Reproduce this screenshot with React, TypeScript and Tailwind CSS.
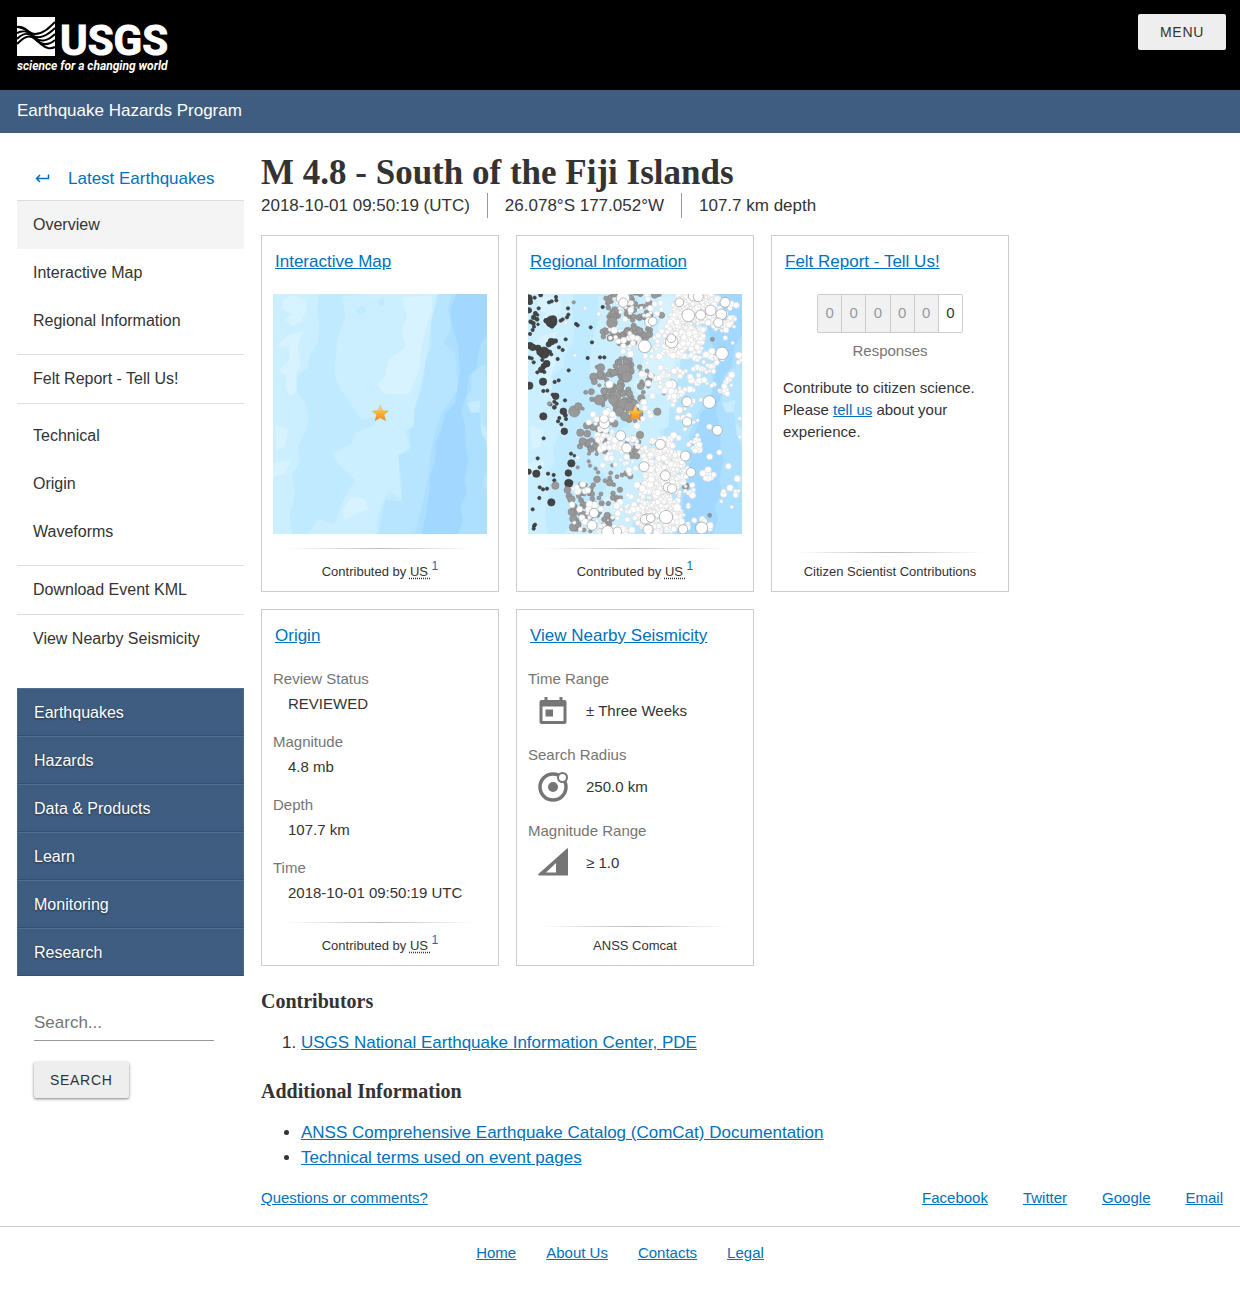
import type { ReactNode } from 'react';

const linkClass = 'text-[#0071bc] underline hover:text-[#205493]';

const pageGroups = [
  ['Overview', 'Interactive Map', 'Regional Information'],
  ['Felt Report - Tell Us!'],
  ['Technical', 'Origin', 'Waveforms'],
  ['Download Event KML'],
  ['View Nearby Seismicity'],
];

const groupClasses = [
  'border-t pb-[9px]',
  'border-t',
  'border-t pt-2 pb-[9px]',
  'border-t',
  'border-t',
];

const siteLinks = ['Earthquakes', 'Hazards', 'Data & Products', 'Learn', 'Monitoring', 'Research'];

const originFacts = [
  { label: 'Review Status', value: 'REVIEWED' },
  { label: 'Magnitude', value: '4.8 mb' },
  { label: 'Depth', value: '107.7 km' },
  { label: 'Time', value: '2018-10-01 09:50:19 UTC' },
];

type Dot = [x: number, y: number, r: number];
type Cluster = [x: number, y: number, rx: number, ry: number, count: number];

// Deep events, drawn individually
const deepDots: Dot[] = [
  [56, 205, 11], [60, 216, 8], [74, 203, 5], [92, 195, 6], [117, 217, 5], [125, 214, 5], [138, 201, 5], [139, 211, 5],
  [57, 241, 8], [86, 235, 5], [76, 250, 6], [71, 262, 7], [81, 268, 6], [83, 255, 4], [62, 275, 6], [70, 280, 6],
  [72, 290, 5], [68, 300, 5], [60, 312, 5], [108, 272, 7], [124, 275, 17], [130, 267, 10], [126, 289, 6], [84, 283, 4],
  [152, 272, 5], [158, 268, 5], [171, 262, 5], [174, 235, 5], [175, 254, 5], [198, 282, 5], [203, 286, 5], [242, 292, 5],
  [278, 231, 5], [246, 337, 5], [167, 328, 5], [124, 335, 10], [136, 333, 7], [116, 343, 8], [60, 347, 10], [68, 352, 10],
  [84, 354, 9], [102, 368, 17], [90, 366, 10], [147, 352, 5], [158, 360, 5], [120, 365, 5], [124, 373, 5], [143, 387, 5],
  [58, 383, 5], [65, 385, 5], [71, 397, 5], [97, 390, 5], [110, 401, 10], [101, 408, 8], [94, 419, 9], [82, 427, 5],
  [103, 426, 5], [176, 421, 5], [233, 384, 5], [270, 382, 5], [283, 382, 5], [58, 467, 11], [99, 455, 11], [134, 456, 5],
  [146, 451, 5], [100, 483, 5], [112, 482, 5], [137, 499, 10], [128, 494, 5], [165, 511, 5], [121, 523, 5], [133, 515, 5],
  [140, 521, 5], [133, 532, 6], [160, 544, 10], [166, 556, 6], [148, 564, 5], [144, 574, 5], [154, 583, 5], [163, 604, 10],
  [168, 567, 5], [100, 559, 11], [101, 625, 5], [83, 685, 5], [56, 725, 8], [79, 731, 11], [89, 712, 5], [114, 731, 5],
  [131, 735, 5], [89, 772, 5], [99, 778, 5], [111, 776, 5], [133, 751, 5], [124, 817, 11], [88, 804, 5], [68, 838, 5],
  [72, 888, 5], [75, 884, 5], [71, 896, 5], [183, 671, 5], [193, 677, 4], [184, 700, 11], [175, 729, 10], [176, 760, 12],
  [237, 649, 5], [213, 845, 5], [184, 757, 5],
];

// Intermediate-depth events
const midDots: Dot[] = [
  [191, 217, 5], [306, 278, 16], [288, 205, 7], [296, 215, 8], [260, 411, 5], [272, 413, 12], [251, 441, 12], [253, 455, 9],
  [227, 487, 6], [244, 485, 9], [267, 510, 15], [193, 544, 17], [205, 529, 11], [211, 608, 11], [218, 634, 11], [210, 649, 8],
  [118, 521, 6], [218, 536, 5], [246, 508, 7], [442, 545, 11], [455, 256, 9], [462, 490, 5], [394, 505, 11], [416, 452, 9],
  [446, 192, 8], [434, 195, 10], [390, 615, 11], [380, 678, 9], [426, 635, 8], [377, 660, 7], [136, 767, 11], [237, 671, 5],
  [236, 694, 5], [240, 707, 5], [203, 712, 5], [257, 716, 5], [264, 727, 5], [307, 706, 5], [302, 729, 6], [299, 744, 6],
  [285, 752, 6], [250, 765, 7], [243, 776, 7], [223, 793, 5], [172, 780, 10], [177, 798, 9], [184, 808, 11], [191, 830, 10],
  [190, 866, 11], [190, 892, 12], [205, 886, 8], [222, 900, 6], [213, 812, 6], [247, 792, 7], [247, 806, 7], [252, 818, 6],
  [321, 740, 6], [336, 735, 6], [350, 730, 9], [361, 739, 8], [311, 764, 6], [309, 790, 7], [319, 810, 6], [332, 803, 6],
  [292, 857, 10], [305, 865, 9], [283, 868, 8], [296, 820, 6], [392, 770, 9], [527, 769, 10], [599, 856, 6], [607, 328, 6],
  [230, 587, 10], [263, 587, 9], [248, 592, 9], [232, 611, 10], [244, 630, 7], [240, 655, 5], [260, 672, 5], [215, 830, 6],
  [343, 420, 19], [350, 440, 16], [317, 500, 16], [338, 525, 17], [310, 510, 14], [356, 530, 14], [328, 545, 14], [345, 560, 13],
];

const midClusters: Cluster[] = [
  [305, 235, 22, 55, 26], [385, 230, 42, 45, 34], [385, 310, 40, 28, 26], [305, 312, 32, 18, 14], [342, 325, 20, 30, 16],
  [343, 415, 28, 34, 34], [300, 450, 50, 32, 22], [320, 505, 48, 42, 44], [370, 545, 24, 34, 22], [290, 590, 42, 26, 14],
  [265, 650, 42, 28, 14], [270, 790, 75, 75, 20], [205, 850, 22, 55, 18], [365, 650, 24, 30, 10], [400, 450, 25, 45, 10],
  [260, 885, 50, 25, 8],
];

// Shallow events: dense clusters first, then the larger ones on top
const shallowClusters: Cluster[] = [
  [560, 225, 70, 42, 170], [530, 290, 60, 60, 190], [520, 345, 60, 38, 90], [620, 240, 62, 50, 56], [640, 280, 40, 28, 18],
  [460, 340, 28, 38, 14], [590, 390, 36, 34, 18], [345, 235, 24, 42, 16], [425, 230, 42, 40, 12], [325, 315, 44, 20, 10],
  [365, 350, 34, 30, 12], [435, 410, 55, 65, 22], [500, 460, 60, 50, 22], [580, 440, 45, 38, 14], [640, 470, 30, 18, 5],
  [520, 510, 55, 42, 14], [285, 590, 38, 50, 26], [300, 645, 42, 35, 22], [350, 660, 42, 38, 18], [455, 665, 62, 42, 60],
  [465, 720, 68, 62, 190], [450, 790, 60, 65, 190], [450, 860, 72, 50, 190], [555, 645, 28, 18, 14], [600, 730, 22, 16, 7],
  [240, 862, 50, 48, 20], [310, 900, 65, 12, 20], [210, 775, 25, 14, 4], [380, 830, 35, 70, 26], [540, 830, 24, 70, 12],
  [525, 590, 45, 60, 12], [405, 560, 40, 55, 7], [655, 400, 40, 100, 12], [640, 720, 55, 110, 9], [590, 880, 28, 20, 8],
  [320, 700, 60, 45, 9], [340, 850, 40, 35, 8],
];

const shallowDots: Dot[] = [
  [225, 235, 5], [168, 279, 5], [195, 376, 5], [266, 252, 6], [339, 205, 20], [340, 218, 14], [419, 276, 15], [428, 274, 13],
  [508, 217, 13], [535, 256, 19], [572, 255, 15], [550, 198, 15], [565, 200, 15], [602, 241, 16], [645, 217, 15], [634, 253, 16],
  [625, 278, 14], [648, 300, 9], [485, 335, 19], [484, 325, 13], [404, 349, 19], [636, 370, 19], [486, 464, 15], [477, 463, 12],
  [531, 515, 15], [598, 516, 19], [531, 575, 14], [622, 601, 15], [598, 590, 8], [298, 463, 11], [236, 577, 8], [283, 580, 16],
  [282, 566, 13], [332, 617, 15], [350, 654, 15], [451, 643, 15], [526, 678, 15], [402, 710, 15], [543, 727, 14], [466, 737, 15],
  [474, 772, 14], [486, 776, 14], [501, 833, 12], [468, 861, 20], [412, 867, 16], [405, 868, 14], [422, 864, 13], [252, 849, 14],
  [246, 886, 15], [293, 905, 18], [322, 904, 13], [414, 899, 15], [519, 898, 14], [575, 894, 18], [655, 709, 9], [587, 745, 8],
  [643, 469, 9], [427, 498, 9], [484, 484, 10], [583, 450, 9], [540, 440, 9], [527, 769, 4], [665, 831, 5], [686, 783, 5],
  [689, 621, 5], [689, 566, 5], [668, 339, 5], [693, 391, 5], [203, 683, 5], [200, 772, 8], [218, 763, 9], [233, 781, 9],
  [249, 553, 9], [288, 548, 10], [307, 553, 9], [186, 824, 9], [404, 534, 9], [377, 715, 8], [568, 644, 9],
];

// Small seeded generator, so that the clusters look the same on every render
function fillClusters(clusters: Cluster[], seed: number, sizes: number[]): Dot[] {
  let state = seed;
  const next = () => {
    state = (state * 1664525 + 1013904223) % 4294967296;
    return state / 4294967296;
  };
  const dots: Dot[] = [];
  clusters.forEach(([x, y, rx, ry, count]) => {
    for (let i = 0; i < count; i++) {
      const angle = next() * Math.PI * 2;
      const distance = Math.sqrt(next());
      dots.push([
        Math.round(x + Math.cos(angle) * distance * rx),
        Math.round(y + Math.sin(angle) * distance * ry),
        sizes[Math.floor(next() * sizes.length)],
      ]);
    }
  });
  return dots;
}

const midEvents = [...fillClusters(midClusters, 11, [5, 6, 7, 8, 10]), ...midDots];
const shallowEvents = [...fillClusters(shallowClusters, 29, [5, 5, 6, 7, 8, 9, 10]), ...shallowDots];

function Dots({ dots, fill, stroke }: { dots: Dot[]; fill: string; stroke: string }) {
  return (
    <g fill={fill} strokeWidth="2">
      {dots.map(([x, y, r], i) => (
        <circle key={i} cx={x} cy={y} r={r} stroke={r > 12 && fill === '#fff' ? '#999' : stroke} />
      ))}
    </g>
  );
}

function OceanMap({ label, star, children }: { label: string; star: string; children?: ReactNode }) {
  return (
    <svg viewBox="54 192 642 720" className="block w-full" role="img" aria-label={label}>
      <defs>
        <linearGradient id={star} x1="0" y1="0" x2="0" y2="1">
          <stop offset="0" stopColor="#ffe9a0" />
          <stop offset="0.4" stopColor="#ffba35" />
          <stop offset="1" stopColor="#fb8412" />
        </linearGradient>
      </defs>
      <path fill="#bfeaff" d="M54 192h642v720H54z" />
      {/* pale shelf on the left */}
      <path
        fill="#cbefff"
        d="M54 192H192L186 240 194 290 188 340 165 375 160 410 128 440 122 480 150 515 160 560 154 600 128 650 134 700 112 730 120 790 104 850 112 912H54z"
      />
      <path
        fill="#d6f3ff"
        d="M84 206L112 196 152 210 156 240 136 276 112 288 90 270 110 252 82 236zM92 320L142 304 128 350 136 400 122 440 126 476 108 500 90 470 96 440 70 420 104 390 100 350 62 350zM60 585L100 600 90 650 64 660zM54 700L106 690 92 730 54 740z"
      />
      {/* central rise */}
      <path
        fill="#cbefff"
        d="M262 200L330 192H548L530 270 520 350 510 420 496 470 480 530 474 590 448 600 466 650 430 676 434 750 440 810 400 780 370 850 364 912H160L190 868 238 880 270 800 300 750 248 700 232 670 290 640 300 610 350 590 370 560 320 570 280 510 250 470 238 430 246 330 270 260z"
      />
      <path
        fill="#d6f3ff"
        d="M440 202L530 196 532 240 514 290 500 350 492 420 462 492 388 492 366 460 390 440 400 390 452 350 440 300 456 260zM290 800L330 808 340 840 306 848 270 870 262 840z"
      />
      <path fill="#bfeaff" d="M300 240l24-12 10 14-20 14zM370 210l14-10 6 20-14 12zM200 580l20-10 12 24-22 16z" />
      {/* slope towards the trench */}
      <path
        fill="#b7e5ff"
        d="M550 192H610V500L560 912H370L390 810 440 815 438 740 430 676 466 662 462 600 476 590 478 540 500 480 512 390 530 350 528 280z"
      />
      <path
        fill="#addfff"
        d="M590 192H696V912H480L500 830 520 740 522 690 536 620 560 550 590 505 612 480 604 420 600 370 566 340 590 290 578 240z"
      />
      <path
        fill="#a2d7ff"
        d="M604 192H696V312L674 350 664 410 640 440 636 490 618 540 630 590 632 650 640 690 628 750 636 790 614 830 624 870 608 912H500L514 850 526 770 524 740 542 690 540 640 558 600 572 550 600 520 608 470 616 420 610 350 590 280 586 240z"
      />
      <path fill="#b7e5ff" d="M650 430L690 400 696 450V660L680 600 672 550 640 530 634 500 650 480zM686 740l10-10v50l-14-10z" />
      <path fill="#c6ecff" d="M636 520l40-10-4 36-24 2zM676 580l20 14v40l-16-20z" />
      {children}
      <path
        fill={`url(#${star})`}
        stroke="#b98a50"
        strokeWidth="1"
        strokeLinejoin="round"
        d="M376 526L383 542 400 543 387 554 392 572 376 563 360 572 365 554 352 543 369 542z"
      />
    </svg>
  );
}

function UsgsLogo() {
  return (
    <svg viewBox="0 0 156 58" className="block h-[58px] w-[156px]" role="img" aria-label="USGS science for a changing world">
      <path fill="#fff" d="M0 0H38V39H0z" />
      <g fill="none" stroke="#000" strokeWidth="2">
        <path d="M0 10C7 9 11 14 15 18C21 25 26 30 31 31C34 31.500 36 31 38 30" />
        <path d="M0 10C8 10 12 17 18 17C26 17 32 11 38 5" />
        <path d="M0 16C6 13 10 14 15 18C21 23 30 19 38 11" />
        <path d="M0 22C6 16 11 15 17 20C23 26 31 24 38 17" />
        <path d="M0 27C7 20 12 17 18 22C24 28 31 29 38 23" />
      </g>
      <text x="43" y="38" fill="#fff" stroke="#fff" fontSize="42" fontWeight="700" className="font-[Roboto,sans-serif]">
        USGS
      </text>
      <text x="0" y="53" fill="#fff" fontSize="12" fontWeight="700" fontStyle="italic" className="font-[Roboto,sans-serif]">
        science for a changing world
      </text>
    </svg>
  );
}

const CalendarIcon = () => (
  <svg viewBox="0 0 30 30" className="size-[30px]" aria-hidden="true">
    <path
      fill="#757575"
      fillRule="evenodd"
      d="M6.500 1h3v3h12V1h3v3h2a2 2 0 0 1 2 2v20a2 2 0 0 1-2 2h-23a2 2 0 0 1-2-2V6a2 2 0 0 1 2-2h3zM4.500 10.500v14.500h21V10.500zM7.500 13.500h7.500v7h-7.500z"
    />
  </svg>
);

const RadiusIcon = () => (
  <svg viewBox="0 0 30 30" className="size-[30px]" aria-hidden="true">
    <circle cx="15" cy="15" r="13" fill="none" stroke="#757575" strokeWidth="3.500" />
    <circle cx="15" cy="15" r="5" fill="#757575" />
    <circle cx="24.500" cy="5.500" r="4.500" fill="#fff" stroke="#757575" strokeWidth="2" />
  </svg>
);

const MagnitudeIcon = () => (
  <svg viewBox="0 0 30 30" className="size-[30px]" aria-hidden="true">
    <path
      fill="#757575"
      fillRule="evenodd"
      d="M29 .500a1 1 0 0 1 1.500 1V26a1.500 1.500 0 0 1-1.500 1.500H1.500a1 1 0 0 1-.500-2zM18 15L8 24.500H18z"
    />
  </svg>
);

const searchFacts = [
  { label: 'Time Range', value: '± Three Weeks', icon: CalendarIcon },
  { label: 'Search Radius', value: '250.0 km', icon: RadiusIcon },
  { label: 'Magnitude Range', value: '≥ 1.0', icon: MagnitudeIcon },
];

function Attribution() {
  return (
    <>
      Contributed by{' '}
      <abbr title="USGS National Earthquake Information Center, PDE" className="underline decoration-dotted underline-offset-2">
        US{' '}
      </abbr>
      <sup className="text-[12px]">
        <a href="#contributors" className="text-[#0071bc]">1</a>
      </sup>
    </>
  );
}

function Card({ title, footer, footerClass, children }: { title: string; footer: ReactNode; footerClass: string; children: ReactNode }) {
  return (
    <section className="flex min-h-[357px] w-[238px] flex-col border border-[#ccc]">
      <h2 className="px-[13px] pt-[13px] pb-5 text-[17px] leading-[25px]">
        <a href="#" className={linkClass}>{title}</a>
      </h2>
      <div className="px-[11px] text-[15px] leading-[22px]">{children}</div>
      <footer className="mt-auto text-center text-[13px] leading-[22px]">
        <div className="mx-6 h-px bg-gradient-to-r from-transparent via-[#bbb] to-transparent" />
        <p className={footerClass}>{footer}</p>
      </footer>
    </section>
  );
}

export default function App() {
  return (
    <div className="min-h-screen bg-white font-['Liberation_Sans',Arial,sans-serif] text-[17px] leading-[25px] text-[#333]">
      <header>
        <div className="flex h-[90px] items-start justify-between bg-black pt-[14px] pr-[14px] pl-[17px]">
          <a href="#" className="pt-[3px]"><UsgsLogo /></a>
          <button type="button" className="h-9 w-[88px] rounded-[2px] bg-[#eee] text-[14px] tracking-wider">MENU</button>
        </div>
        <div className="bg-[#3e5d80] px-[17px] pt-2 pb-[10px]">
          <a href="#" className="text-white">Earthquake Hazards Program</a>
        </div>
      </header>

      <div className="flex gap-[17px] px-[17px] pt-[23px]">
        <aside className="w-[227px] shrink-0">
          <nav aria-label="Event pages" className="text-[16px]">
            <a href="#" className="flex h-11 items-center gap-[18px] pl-[17px] text-[17px] text-[#0071bc]">
              <svg viewBox="0 0 16 16" className="w-4" fill="none" stroke="currentColor" strokeWidth="1.500" aria-hidden="true">
                <path d="M14.500 4.500V8.500H2.500M6 5L2.500 8.500 6 12" />
              </svg>
              Latest Earthquakes
            </a>
            {pageGroups.map((group, i) => (
              <ul key={group[0]} className={`border-[#ddd] ${groupClasses[i]}`}>
                {group.map((page) => (
                  <li key={page}>
                    <a href="#" className={`flex h-12 items-center pb-0.5 pl-4 ${page === 'Overview' ? 'bg-[#f4f4f4]' : ''}`}>{page}</a>
                  </li>
                ))}
              </ul>
            ))}
          </nav>

          <nav aria-label="Site" className="mt-[25px] bg-[#3e5d80] text-[16px] text-white">
            {siteLinks.map((link) => (
              <a
                key={link}
                href="#"
                className="flex h-12 items-center border border-t-[#54708f] border-r-[#4b6889] border-b-[#354f6d] border-l-[#4b6889] pl-4 text-shadow-[0_1px_2px_rgb(0_0_0_/_0.5)]"
              >
                {link}
              </a>
            ))}
          </nav>

          <form className="px-[17px] pt-[30px]" onSubmit={(e) => e.preventDefault()}>
            <input
              type="search"
              aria-label="Search"
              placeholder="Search..."
              className="block h-[35px] w-[180px] border-b border-[#999] outline-none placeholder:text-[#757575]"
            />
            <button type="submit" className="mt-[21px] h-9 rounded-[2px] bg-[#eee] px-4 text-[14px] tracking-wider shadow-[0_1px_3px_rgb(0_0_0_/_0.5)]">
              SEARCH
            </button>
          </form>
        </aside>

        <main className="min-w-0 flex-1">
          <h1 className="pb-1 font-['Liberation_Serif',serif] text-[35px] leading-[33px] font-bold">M 4.8 - South of the Fiji Islands</h1>
          <ul className="flex">
            <li className="pr-[17px]">2018-10-01 09:50:19 (UTC)</li>
            <li className="border-l border-[#999] px-[17px]">26.078°S 177.052°W</li>
            <li className="border-l border-[#999] pl-[17px]">107.7 km depth</li>
          </ul>

          <div className="mt-[17px] flex max-w-[750px] flex-wrap gap-[17px]">
            <Card title="Interactive Map" footer={<Attribution />} footerClass="pt-3 pb-2">
              <OceanMap label="Map of the event location" star="starInteractive" />
            </Card>
            <Card title="Regional Information" footer={<Attribution />} footerClass="pt-3 pb-2">
              <OceanMap label="Map of regional seismicity" star="starRegional">
                <Dots dots={deepDots} fill="#444" stroke="#3a3a3a" />
                <Dots dots={midEvents} fill="#999" stroke="#888" />
                <Dots dots={shallowEvents} fill="#fff" stroke="#dcdcdc" />
              </OceanMap>
            </Card>
            <Card title="Felt Report - Tell Us!" footer="Citizen Scientist Contributions" footerClass="pt-2 pb-2">
              <div className="mx-auto flex h-[39px] w-[146px] divide-x divide-[#ccc] overflow-hidden rounded-[2px] border border-[#ccc] bg-[#f1f1f1] leading-[36px] text-[#999]">
                {[0, 1, 2, 3, 4, 5].map((place) => (
                  <span key={place} className="flex-1 text-center last:bg-white last:text-[#333]">0</span>
                ))}
              </div>
              <p className="pt-[7px] text-center text-[#757575]">Responses</p>
              <p className="mt-[15px]">
                Contribute to citizen science. Please <a href="#" className={linkClass}>tell us</a> about your experience.
              </p>
            </Card>
            <Card title="Origin" footer={<Attribution />} footerClass="pt-3 pb-2">
              <dl>
                {originFacts.map((fact) => (
                  <div key={fact.label} className="mb-[13px] last:mb-0">
                    <dt className="text-[#757575]">{fact.label}</dt>
                    <dd className="pl-[15px] leading-[28px]">{fact.value}</dd>
                  </div>
                ))}
              </dl>
            </Card>
            <Card title="View Nearby Seismicity" footer="ANSS Comcat" footerClass="pt-2 pb-2">
              <dl>
                {searchFacts.map(({ label, value, icon: Icon }) => (
                  <div key={label} className="mb-4">
                    <dt className="text-[#757575]">{label}</dt>
                    <dd className="flex h-[38px] items-center gap-[18px] pt-1 pl-[10px]">
                      <Icon />
                      {value}
                    </dd>
                  </div>
                ))}
              </dl>
            </Card>
          </div>

          <h2 id="contributors" className="mt-[23px] font-['Liberation_Serif',serif] text-[20px] font-bold">Contributors</h2>
          <ol className="mt-4 list-decimal pl-10">
            <li><a href="#" className={linkClass}>USGS National Earthquake Information Center, PDE</a></li>
          </ol>
          <h2 className="mt-6 font-['Liberation_Serif',serif] text-[20px] font-bold">Additional Information</h2>
          <ul className="mt-4 list-disc pl-10">
            <li><a href="#" className={linkClass}>ANSS Comprehensive Earthquake Catalog (ComCat) Documentation</a></li>
            <li><a href="#" className={linkClass}>Technical terms used on event pages</a></li>
          </ul>

          <div className="mt-[15px] flex justify-between text-[15px]">
            <a href="#" className={linkClass}>Questions or comments?</a>
            <div className="flex gap-[35px]">
              {['Facebook', 'Twitter', 'Google', 'Email'].map((name) => (
                <a key={name} href="#" className={linkClass}>{name}</a>
              ))}
            </div>
          </div>
        </main>
      </div>

      <footer className="mt-4 flex justify-center gap-[30px] border-t border-[#ccc] pt-[13px] pb-7 text-[15px]">
        {['Home', 'About Us', 'Contacts', 'Legal'].map((name) => (
          <a key={name} href="#" className={linkClass}>{name}</a>
        ))}
      </footer>
    </div>
  );
}
